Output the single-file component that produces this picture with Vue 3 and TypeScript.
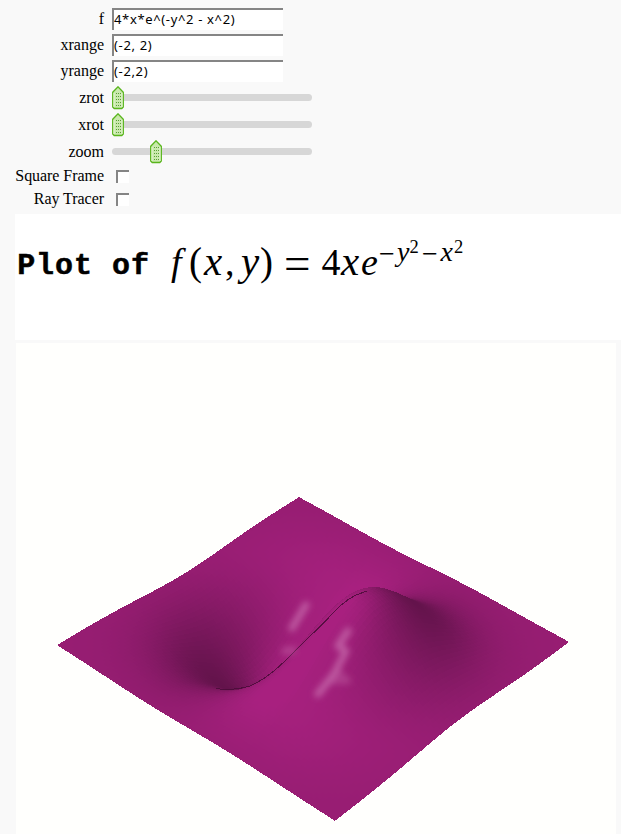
<script setup lang="ts">
import { ref } from 'vue'

interface Field { label: string; value: string }
interface Slider { label: string; offset: number }
interface Facet { points: string; fill: string }

const fields = ref<Field[]>([
  { label: 'f', value: '4*x*e^(-y^2 - x^2)' },
  { label: 'xrange', value: '(-2, 2)' },
  { label: 'yrange', value: '(-2,2)' },
])
const sliders: Slider[] = [
  { label: 'zrot', offset: 0 },
  { label: 'xrot', offset: 0 },
  { label: 'zoom', offset: 38 },
]
const toggles = ['Square Frame', 'Ray Tracer']
const gripRows = [7, 10, 13, 16, 19]

const f = (x: number, y: number) => 4 * x * Math.exp(-y * y - x * x)

// Perspective projection of the surface into the 600px wide viewport.
function project(x: number, y: number): [number, number] {
  const s = x / 2
  const t = y / 2
  const z = f(x, y)
  const w = 1 - 0.0434 * s + 0.0523 * t - 0.014 * z
  return [
    300 + (-0.7 + 136.95 * s + 119.05 * t) / w,
    300 + (0.47 + 79.5 * s - 80.97 * t - 43.5 * z) / w,
  ]
}

// Lambert shading: a key light along y and a weak grazing fill along x.
function shade(x: number, y: number): string {
  const e = Math.exp(-x * x - y * y)
  const gx = 0.5 * 4 * (1 - 2 * x * x) * e
  const gy = 0.5 * -8 * x * y * e
  const n = Math.sqrt(1 + gx * gx + gy * gy)
  const key = Math.max(0, (0.475 * gy + 0.88) / n)
  const fill = Math.max(0, gx / n)
  const v = Math.min(168, Math.max(92, 50 + 115 * key + 36 * fill))
  return `rgb(${v.toFixed(0)},${(v * 0.193).toFixed(0)},${(v * 0.758).toFixed(0)})`
}

const N = 90
const facets: Facet[] = []
for (let i = 0; i < N; i++) {
  for (let j = N - 1; j >= 0; j--) {
    const x0 = -2 + (4 * i) / N
    const x1 = -2 + (4 * (i + 1)) / N
    const y0 = -2 + (4 * j) / N
    const y1 = -2 + (4 * (j + 1)) / N
    const q = [project(x0, y0), project(x1, y0), project(x1, y1), project(x0, y1)]
    facets.push({
      points: q.map((p) => p[0].toFixed(3) + ',' + p[1].toFixed(3)).join(' '),
      fill: shade((x0 + x1) / 2, (y0 + y1) / 2),
    })
  }
}
</script>

<template>
  <main class="page">
    <form class="controls">
      <template v-for="field in fields" :key="field.label">
        <label class="name">{{ field.label }}</label>
        <input v-model="field.value" class="entry" type="text" />
      </template>
      <template v-for="s in sliders" :key="s.label">
        <label class="name">{{ s.label }}</label>
        <div class="slider">
          <svg class="handle" :style="{ left: s.offset + 'px' }" width="12" height="24" viewBox="0 0 12 24">
            <path d="M.7 6.3 6 .8l5.3 5.5V21L9.8 22.5H2.2L.7 21Z" fill="#c9e9ac" stroke="#59b51c" stroke-width="1.3" />
            <path d="M2 7v14M10 7v14" stroke="#e3f5d3" stroke-width="1" />
            <g fill="#5a9f35">
              <template v-for="y in gripRows" :key="y">
                <rect x="4" :y="y" width="1" height="1" />
                <rect x="6" :y="y" width="1" height="1" />
                <rect x="8" :y="y" width="1" height="1" />
              </template>
            </g>
          </svg>
        </div>
      </template>
      <template v-for="t in toggles" :key="t">
        <label class="name low">{{ t }}</label>
        <input class="check" type="checkbox" />
      </template>
    </form>

    <section class="title">
      <svg width="606" height="125" viewBox="15 214 606 125">
        <text class="mono" y="274" x="26.2 45 64 83 102 121 140">Plot of</text>
        <g class="math">
          <text class="it" x="171" y="275">f</text>
          <text class="paren" x="189" y="275">(</text>
          <text class="it wide" x="204" y="275">x</text>
          <text x="225" y="275">,</text>
          <text class="it wide" x="241" y="275">y</text>
          <text class="paren" x="260" y="275">)</text>
          <text class="eq" x="284" y="279">=</text>
          <text x="321.5" y="275">4</text>
          <text class="it wide" x="341" y="275">x</text>
          <text class="it" x="361" y="275">e</text>
          <text class="sup" x="379" y="263">−</text>
          <text class="sup it" x="397" y="261">y</text>
          <text class="tiny" x="409.5" y="252.5">2</text>
          <text class="sup" x="422" y="263">−</text>
          <text class="sup it" x="440.5" y="261">x</text>
          <text class="tiny" x="454" y="252.5">2</text>
        </g>
      </svg>
    </section>

    <section class="viewport">
      <svg width="600" height="491" viewBox="0 0 600 491">
        <defs>
          <filter id="soft" x="-50%" y="-50%" width="200%" height="200%"><feGaussianBlur stdDeviation="3" /></filter>
        </defs>
        <g shape-rendering="crispEdges">
          <polygon v-for="(q, k) in facets" :key="k" :points="q.points" :fill="q.fill" />
        </g>
        <path class="fold" shape-rendering="crispEdges" d="M200 345.500C212 347.500 223 346.500 234 343 C251 336 264 323 277 310S304 284 324 263Q332 256 340 252L351 248" />
        <g class="gloss" filter="url(#soft)">
          <path d="M290 262 276 285" stroke-width="7" />
          <path d="M277 307 269 308" stroke-width="7" opacity=".6" />
          <path d="M332 288 322 303 330 308 318 331 302 351" stroke-width="7" />
          <path d="M322 329 332 338 316 338" stroke-width="6" opacity=".5" />
        </g>
      </svg>
    </section>
  </main>
</template>

<style>
body { margin: 0; background: #f9f9f9; overflow: hidden; }
</style>

<style scoped>
.page { height: 834px; overflow: hidden; box-sizing: border-box; padding-top: 6px; font-family: "Liberation Serif", serif; color: #000; background: #f9f9f9; }
.controls { display: grid; grid-template-columns: 104px 200px; column-gap: 8px; grid-template-rows: 26px 26px 26px 27px 27px 27px 23px 23px; align-items: center; height: 208px; }
.name { text-align: right; font-size: 16px; line-height: 18px; white-space: nowrap; }
.low { padding-bottom: 2px; letter-spacing: -.05px; }
.entry { box-sizing: border-box; width: 171px; height: 22px; margin: 0; padding: 0 0 2px 0; border: 0 solid #858585; border-top-width: 2px; border-left-width: 2px; border-radius: 0; background: #fff; font: 13px "Noto Sans", sans-serif; letter-spacing: .65px; outline: 0; color: #000; }
.slider { position: relative; height: 7px; border-radius: 4px; background: #d7d7d7; }
.handle { position: absolute; top: -8px; display: block; }
.check { appearance: none; box-sizing: border-box; width: 13px; height: 13px; margin: 0 0 0 4px; border: 0 solid #858585; border-top-width: 2px; border-left-width: 2px; border-radius: 0; background: #fff; }
.title { margin-left: 15px; height: 126px; background: #fff; }
.title svg, .viewport svg { display: block; }
.viewport { margin: 3px 0 0 16px; width: 600px; height: 491px; background: #fffffd; }
.mono { font: bold 30px "Liberation Mono", monospace; text-anchor: middle; stroke: #000; stroke-width: .5; }
.math { font: 38px "Liberation Serif", serif; }
.it { font-style: italic; }
.wide { font-size: 41px; }
.paren { font-size: 39px; }
.eq { font-size: 47px; }
.sup { font-size: 28px; }
.tiny { font-size: 18.5px; }
.gloss path { fill: none; stroke: #c261a5; stroke-opacity: .9; stroke-linecap: round; stroke-linejoin: round; }
.fold { fill: none; stroke: #4a0c38; stroke-width: 1; stroke-opacity: .85; }
</style>
